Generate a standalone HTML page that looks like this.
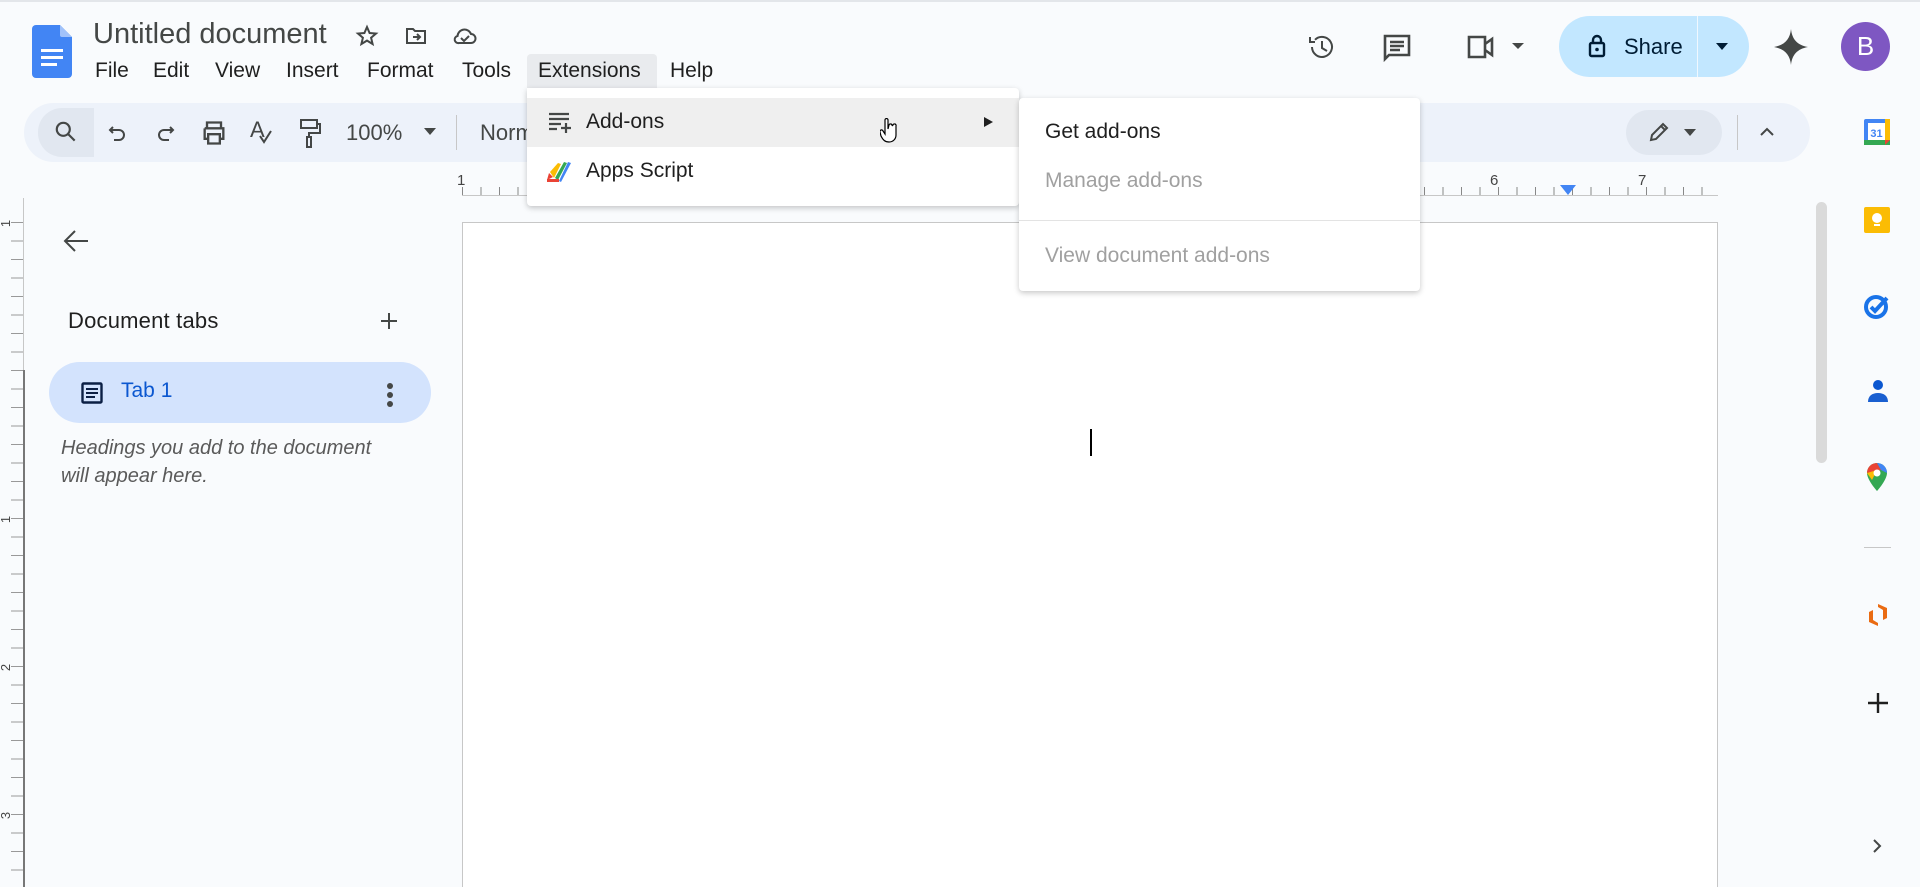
<!DOCTYPE html>
<html style="overflow:hidden;height:887px"><head><meta charset="utf-8"><style>
*{box-sizing:border-box;margin:0;padding:0}
body{width:1920px;height:887px;overflow:hidden;background:#f9fbfd;font-family:"Liberation Sans",Arial,sans-serif;color:#1f1f1f;position:relative}
.a{position:absolute}
.menu span{position:absolute;top:59px;font-size:21px;color:#1f1f1f}
svg{position:absolute}
.ic{fill:none;stroke:#444746;stroke-width:2}
</style></head><body>
<div class="a" style="left:0;top:0;width:1920px;height:2px;background:#e3e6ea"></div>
<svg style="left:32px;top:25px" width="40" height="53" viewBox="0 0 40 53"><path d="M4 0h24l12 12v37a4 4 0 0 1-4 4H4a4 4 0 0 1-4-4V4a4 4 0 0 1 4-4z" fill="#4285f4"/><path d="M28 0v10a2 2 0 0 0 2 2h10z" fill="#a1c2fa"/><rect x="9" y="24" width="22" height="3" fill="#fff"/><rect x="9" y="31" width="22" height="3" fill="#fff"/><rect x="9" y="38" width="16" height="3" fill="#fff"/></svg>
<div class="a" style="left:93px;top:18px;font-size:29px;color:#444746">Untitled document</div>
<svg style="left:355px;top:24px" width="24" height="24" viewBox="0 0 24 24"><path class="ic" d="M12 3l2.6 6 6.4.5-4.9 4.2 1.5 6.3L12 16.6 6.4 20l1.5-6.3L3 9.5 9.4 9z"/></svg>
<svg style="left:404px;top:24px" width="24" height="24" viewBox="0 0 24 24"><path class="ic" d="M3 5h6l2 2h10v12H3z"/><path class="ic" d="M9 13h7M13 10l3 3-3 3"/></svg>
<svg style="left:452px;top:24px" width="26" height="24" viewBox="0 0 26 24"><path class="ic" d="M7 19h12a4.5 4.5 0 0 0 0-9 7 7 0 0 0-13.5 2A3.5 3.5 0 0 0 7 19z"/><path class="ic" d="M9 14l3 3 5-5"/></svg>
<div class="a" style="left:527px;top:54px;width:130px;height:34px;background:#e9ebee;border-radius:4px 4px 0 0"></div>
<div class="menu">
<span style="left:95px">File</span><span style="left:153px">Edit</span><span style="left:215px">View</span><span style="left:286px">Insert</span><span style="left:367px">Format</span><span style="left:462px">Tools</span><span style="left:538px">Extensions</span><span style="left:670px">Help</span>
</div>
<svg style="left:1306px;top:31px" width="32" height="32" viewBox="0 0 32 32"><path class="ic" stroke-width="2.6" d="M6 16a10 10 0 1 0 3-7.2M4 6v5h5M16 10v7l5 3"/></svg>
<svg style="left:1381px;top:32px" width="32" height="32" viewBox="0 0 32 32"><path d="M4 4h24v19H8l-4 4z" fill="none" stroke="#444746" stroke-width="2.6"/><path d="M9 10h14M9 14h14M9 18h10" stroke="#444746" stroke-width="2.4"/></svg>
<svg style="left:1464px;top:32px" width="36" height="30" viewBox="0 0 36 30"><path d="M5 5h16v20H5z" fill="none" stroke="#444746" stroke-width="2.6"/><path d="M21 12l7-5v16l-7-5" fill="none" stroke="#444746" stroke-width="2.6"/></svg>
<div class="a" style="left:1512px;top:43px;border:6px solid transparent;border-top:6px solid #444746;border-bottom:0"></div>
<div class="a" style="left:1559px;top:16px;width:190px;height:61px;background:#c2e7ff;border-radius:31px"></div>
<div class="a" style="left:1697px;top:16px;width:1px;height:61px;background:#f0f8ff"></div>
<svg style="left:1588px;top:33px" width="18" height="26" viewBox="0 0 18 26"><rect x="2" y="10" width="14" height="13" rx="1.5" fill="none" stroke="#001d35" stroke-width="2.4"/><path d="M5 10V7a4 4 0 0 1 8 0v3" fill="none" stroke="#001d35" stroke-width="2.4"/><circle cx="9" cy="16.5" r="1.8" fill="#001d35"/></svg>
<div class="a" style="left:1624px;top:34px;font-size:22px;color:#001d35">Share</div>
<div class="a" style="left:1716px;top:43px;border:6px solid transparent;border-top:7px solid #001d35;border-bottom:0"></div>
<svg style="left:1774px;top:29px" width="34" height="36" viewBox="0 0 34 36"><path d="M17 0C18 10 23 16 34 18 23 20 18 26 17 36 16 26 11 20 0 18 11 16 16 10 17 0z" fill="#444746"/></svg>
<div class="a" style="left:1841px;top:22px;width:49px;height:49px;border-radius:50%;background:#7e57c2;color:#fff;font-size:26px;text-align:center;line-height:49px">B</div>
<div class="a" style="left:24px;top:103px;width:1786px;height:59px;background:#edf2fa;border-radius:30px"></div>
<div class="a" style="left:38px;top:108px;width:56px;height:49px;background:#e1e7f0;border-radius:24px 0 0 24px"></div>
<svg style="left:53px;top:119px" width="26" height="26" viewBox="0 0 24 24"><circle cx="9.5" cy="9.5" r="6" class="ic" stroke-width="2.2"/><path class="ic" stroke-width="2.4" d="M14 14l6 6"/></svg>
<svg style="left:106px;top:121px" width="24" height="24" viewBox="0 0 24 24"><path class="ic" d="M7 6L4 9l3 3M4 9h9a5 5 0 0 1 0 10H8"/></svg>
<svg style="left:153px;top:121px" width="24" height="24" viewBox="0 0 24 24"><path class="ic" d="M17 6l3 3-3 3M20 9h-9a5 5 0 0 0 0 10h5"/></svg>
<svg style="left:200px;top:119px" width="28" height="28" viewBox="0 0 24 24"><path class="ic" d="M6 8V3h12v5M4 8h16v9h-3M7 17H4V8M7 13h10v8H7z"/></svg>
<div class="a" style="left:250px;top:117px;font-size:22px;color:#444746">A</div>
<svg style="left:258px;top:130px" width="16" height="16" viewBox="0 0 16 16"><path class="ic" d="M2 6l4 6 7-11"/></svg>
<svg style="left:296px;top:117px" width="26" height="32" viewBox="0 0 26 32"><path class="ic" d="M5 3h16v8H5zM21 7h3v9H13v4M11 20h4v10h-4z"/></svg>
<div class="a" style="left:346px;top:120px;font-size:22px;color:#444746">100%</div>
<div class="a" style="left:424px;top:128px;border:6px solid transparent;border-top:7px solid #444746;border-bottom:0"></div>
<div class="a" style="left:456px;top:115px;width:1px;height:35px;background:#c7c7c7"></div>
<div class="a" style="left:480px;top:120px;font-size:22px;color:#444746">Norm</div>
<div class="a" style="left:1626px;top:110px;width:96px;height:45px;background:#e1e7f0;border-radius:23px"></div>
<svg style="left:1647px;top:120px" width="24" height="24" viewBox="0 0 24 24"><path class="ic" stroke-width="2.2" d="M4 20l1-5L16 4l4 4L9 19zM14 6l4 4"/></svg>
<div class="a" style="left:1684px;top:129px;border:6px solid transparent;border-top:7px solid #444746;border-bottom:0"></div>
<div class="a" style="left:1737px;top:115px;width:1px;height:35px;background:#c7c7c7"></div>
<svg style="left:1758px;top:124px" width="18" height="14" viewBox="0 0 18 14"><path class="ic" stroke-width="2.2" d="M3 11l6-6 6 6"/></svg>
<div class="a" style="left:462px;top:195px;width:1256px;height:1px;background:#c7c7c7"></div>
<div class="a" style="left:462px;top:187px;width:1256px;height:8px;background:repeating-linear-gradient(90deg,#888 0 1px,transparent 1px 18.5px)"></div>
<div class="a" style="left:457px;top:172px;font-size:15px;color:#444">1</div>
<div class="a" style="left:1490px;top:172px;font-size:15px;color:#444">6</div>
<div class="a" style="left:1638px;top:172px;font-size:15px;color:#444">7</div>
<div class="a" style="left:1560px;top:185px;border:8px solid transparent;border-top:10px solid #4285f4;border-bottom:0"></div>
<div class="a" style="left:23px;top:198px;width:1px;height:689px;background:#c7c7c7"></div>
<div class="a" style="left:23px;top:370px;width:2px;height:517px;background:#777"></div>
<div class="a" style="left:11px;top:222px;width:12px;height:665px;background:repeating-linear-gradient(180deg,#999 0 1px,transparent 1px 18.5px)"></div>
<div class="a" style="left:2px;top:216px;font-size:13px;color:#444;transform:rotate(-90deg)">1</div>
<div class="a" style="left:2px;top:512px;font-size:13px;color:#444;transform:rotate(-90deg)">1</div>
<div class="a" style="left:2px;top:660px;font-size:13px;color:#444;transform:rotate(-90deg)">2</div>
<div class="a" style="left:2px;top:808px;font-size:13px;color:#444;transform:rotate(-90deg)">3</div>
<svg style="left:62px;top:228px" width="28" height="26" viewBox="0 0 28 26"><path class="ic" stroke-width="2.6" d="M26 13H3M13 3L3 13l10 10"/></svg>
<div class="a" style="left:68px;top:308px;font-size:22px;color:#1f1f1f;letter-spacing:.2px">Document tabs</div>
<svg style="left:379px;top:311px" width="20" height="20" viewBox="0 0 20 20"><path class="ic" stroke-width="2.4" d="M10 2v16M2 10h16"/></svg>
<div class="a" style="left:49px;top:362px;width:382px;height:61px;background:#d3e3fd;border-radius:31px"></div>
<svg style="left:81px;top:382px" width="22" height="22" viewBox="0 0 22 22"><rect x="1.5" y="1.5" width="19" height="19" rx="1" fill="none" stroke="#0b1f44" stroke-width="2.4"/><path d="M5 7h12M5 11h12M5 15h9" stroke="#0b1f44" stroke-width="2"/></svg>
<div class="a" style="left:121px;top:379px;font-size:21px;color:#0b57d0">Tab 1</div>
<div class="a" style="left:387px;top:383px;width:6px;height:6px;border-radius:50%;background:#444746"></div>
<div class="a" style="left:387px;top:392px;width:6px;height:6px;border-radius:50%;background:#444746"></div>
<div class="a" style="left:387px;top:401px;width:6px;height:6px;border-radius:50%;background:#444746"></div>
<div class="a" style="left:61px;top:434px;font-size:20px;font-style:italic;color:#5a5a5a;line-height:28px">Headings you add to the document<br>will appear here.</div>
<div class="a" style="left:462px;top:222px;width:1256px;height:665px;background:#fff;border:1px solid #c7c7c7;border-bottom:0"></div>
<div class="a" style="left:1090px;top:429px;width:2px;height:27px;background:#000"></div>
<div class="a" style="left:1816px;top:202px;width:11px;height:261px;background:#dadada;border-radius:6px"></div>
<svg style="left:1863px;top:118px" width="28" height="28" viewBox="0 0 28 28"><rect x="1" y="1" width="26" height="26" rx="2" fill="#4285f4"/><rect x="1" y="22" width="26" height="5" fill="#34a853"/><rect x="22" y="1" width="5" height="21" fill="#fbbc04"/><path d="M22 22h5l-5 5z" fill="#ea4335"/><rect x="5" y="5" width="17" height="17" fill="#fff"/><text x="13.5" y="19" font-size="11" text-anchor="middle" fill="#4285f4" font-family="Liberation Sans" font-weight="bold">31</text></svg>
<svg style="left:1863px;top:206px" width="28" height="28" viewBox="0 0 28 28"><rect x="1" y="1" width="26" height="26" rx="2" fill="#fbbc04"/><circle cx="14" cy="12" r="5" fill="#fff"/><rect x="11" y="18" width="6" height="2" fill="#fff"/></svg>
<svg style="left:1863px;top:292px" width="28" height="28" viewBox="0 0 28 28"><circle cx="13" cy="15" r="10" fill="none" stroke="#1a73e8" stroke-width="4"/><path d="M8 15l4 4 12-13" fill="none" stroke="#1a73e8" stroke-width="4"/></svg>
<svg style="left:1865px;top:378px" width="26" height="28" viewBox="0 0 26 28"><circle cx="13" cy="7" r="5" fill="#0b57d0"/><path d="M3 24c0-6 4-9 10-9s10 3 10 9z" fill="#1a5fd0"/></svg>
<svg style="left:1866px;top:462px" width="22" height="30" viewBox="0 0 22 30"><path d="M11 1a10 10 0 0 1 10 10c0 7-10 18-10 18S1 18 1 11A10 10 0 0 1 11 1z" fill="#34a853"/><path d="M1 11A10 10 0 0 1 11 1l4 7z" fill="#ea4335"/><path d="M11 1a10 10 0 0 1 10 10L15 8z" fill="#4285f4"/><path d="M1 11l5 7 5-10z" fill="#fbbc04"/><circle cx="11" cy="11" r="3.5" fill="#fff"/></svg>
<div class="a" style="left:1864px;top:547px;width:27px;height:1px;background:#c7c7c7"></div>
<svg style="left:1865px;top:602px" width="26" height="26" viewBox="0 0 26 26"><path d="M13 2l9 4v10l-4 2V8l-5-3zM13 24l-9-4V10l4-2v10l5 3z" fill="#ea6b12"/></svg>
<svg style="left:1867px;top:692px" width="22" height="22" viewBox="0 0 22 22"><path d="M11 1v20M1 11h20" stroke="#1f1f1f" stroke-width="2.4"/></svg>
<svg style="left:1870px;top:837px" width="14" height="18" viewBox="0 0 14 18"><path class="ic" d="M4 3l6 6-6 6"/></svg>
<div class="a" style="left:527px;top:88px;width:492px;height:118px;background:#fff;border-radius:0 4px 4px 4px;box-shadow:0 2px 6px rgba(0,0,0,.22)"></div>
<div class="a" style="left:527px;top:98px;width:492px;height:49px;background:#efefef"></div>
<svg style="left:548px;top:112px" width="26" height="22" viewBox="0 0 26 22"><path d="M1 2h20M1 7h20M1 12h12M1 17h8M18 11v10M13 16h10" stroke="#444746" stroke-width="2.2"/></svg>
<div class="a" style="left:586px;top:110px;font-size:21px;color:#1f1f1f">Add-ons</div>
<div class="a" style="left:984px;top:117px;border:5px solid transparent;border-left:9px solid #1f1f1f;border-right:0"></div>
<svg style="left:545px;top:160px" width="28" height="24" viewBox="0 0 28 24"><path d="M2 20l6-3-4-4z" fill="#ea4335"/><path d="M5 12l4 6 7-14-3-1z" fill="#fbbc04"/><path d="M10 18l3 2 9-17-3-1z" fill="#34a853"/><path d="M14 21l2 1 10-19-3-1z" fill="#4285f4"/><rect x="2" y="19" width="12" height="3" fill="#ea4335"/></svg>
<div class="a" style="left:586px;top:159px;font-size:21px;color:#1f1f1f">Apps Script</div>
<svg style="left:880px;top:118px" width="18" height="26" viewBox="0 0 18 26"><path d="M5 2a1.5 1.5 0 0 1 3 0v9l1-4a1.5 1.5 0 0 1 3 1l1-1a1.5 1.5 0 0 1 3 1v9c0 4-3 7-7 7s-6-2-8-6l-1-4a1.5 1.5 0 0 1 3-1l2 3z" fill="#fff" stroke="#000" stroke-width="1.2"/></svg>
<div class="a" style="left:1019px;top:98px;width:401px;height:193px;background:#fff;border-radius:4px;box-shadow:0 2px 6px rgba(0,0,0,.22)"></div>
<div class="a" style="left:1045px;top:120px;font-size:21px;color:#1f1f1f">Get add-ons</div>
<div class="a" style="left:1045px;top:169px;font-size:21px;color:#a0a0a0">Manage add-ons</div>
<div class="a" style="left:1019px;top:220px;width:401px;height:1px;background:#e3e3e3"></div>
<div class="a" style="left:1045px;top:244px;font-size:21px;color:#a0a0a0">View document add-ons</div>
</body></html>
